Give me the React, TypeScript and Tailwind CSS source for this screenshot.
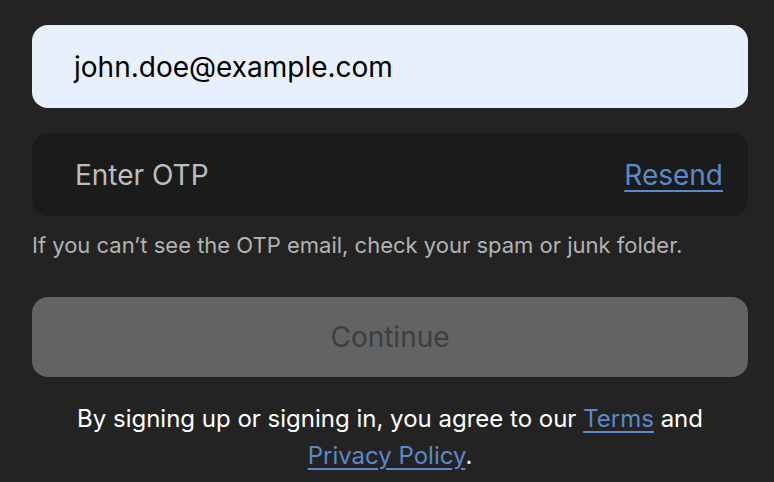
export default function App() {
  return (
    <div
      className="min-h-[482px] w-[774px] bg-[#232323] pl-8 pr-[26px] pt-[25px]"
      style={{ fontFamily: "Inter, 'Noto Sans', sans-serif" }}
    >
      <div className="flex h-[83px] items-center rounded-2xl bg-[#e8f0fe] pl-[42px] text-[28px] text-black">
        john.doe@example.com
      </div>

      <div className="mt-[25px] flex h-[83px] items-center justify-between rounded-2xl bg-[#1a1b1b] pl-[43px] pr-[25px] text-[28px]">
        <span className="text-[#bdbdbd]">Enter OTP</span>
        <a href="#" className="text-[#5d89c8] underline decoration-2 underline-offset-[5px]">
          Resend
        </a>
      </div>

      <p className="mt-[15px] text-[22px] leading-[28px] text-[#b3b3b3]">
        If you can’t see the OTP email, check your spam or junk folder.
      </p>

      <button className="mt-[38px] flex h-[80px] w-full items-center justify-center rounded-2xl bg-[#636363] text-[28px] text-[#3b3e43]">
        Continue
      </button>

      <p className="mx-auto mt-[23px] w-[660px] text-center text-[24px] leading-[37px] text-white">
        By signing up or signing in, you agree to our{" "}
        <a href="#" className="text-[#5d89c8] underline underline-offset-[4px]">
          Terms
        </a>{" "}
        and{" "}
        <a href="#" className="text-[#5d89c8] underline underline-offset-[4px]">
          Privacy Policy
        </a>
        .
      </p>
    </div>
  )
}
